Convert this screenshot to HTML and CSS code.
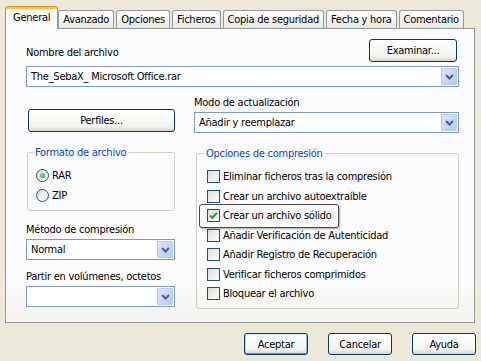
FILE: index.html
```html
<!DOCTYPE html>
<html lang="es">
<head>
    <meta charset="UTF-8">
    <title>Nombre y parámetros del archivo</title>
    <link rel="stylesheet" href="styles.css">
</head>
<body>

<div class="dialog">
    <div class="tabs">
        <div class="tab active">General</div>
        <div class="tab">Avanzado</div>
        <div class="tab">Opciones</div>
        <div class="tab">Ficheros</div>
        <div class="tab">Copia de seguridad</div>
        <div class="tab">Fecha y hora</div>
        <div class="tab">Comentario</div>
    </div>

    <div class="panel">
        <div class="name-row">
            <span class="label">Nombre del archivo</span>
            <button class="btn btn-browse">Examinar...</button>
        </div>
        <div class="combo combo-name">
            <span class="combo-text">The_SebaX_ Microsoft Office.rar</span>
            <span class="combo-arrow"><svg width="9" height="6" viewBox="0 0 9 6"><path d="M1 1l3.5 3.5L8 1" fill="none" stroke="#4D6185" stroke-width="2"/></svg></span>
        </div>

        <div class="cols">
            <div class="col-left">
                <button class="btn btn-profiles">Perfiles...</button>

                <fieldset class="group group-format">
                    <legend>Formato de archivo</legend>
                    <div class="radio-row"><span class="radio checked"></span>RAR</div>
                    <div class="radio-row"><span class="radio"></span>ZIP</div>
                </fieldset>

                <div class="label label-method">Método de compresión</div>
                <div class="combo">
                    <span class="combo-text">Normal</span>
                    <span class="combo-arrow"><svg width="9" height="6" viewBox="0 0 9 6"><path d="M1 1l3.5 3.5L8 1" fill="none" stroke="#4D6185" stroke-width="2"/></svg></span>
                </div>

                <div class="label label-split">Partir en volúmenes, octetos</div>
                <div class="combo">
                    <span class="combo-text"></span>
                    <span class="combo-arrow"><svg width="9" height="6" viewBox="0 0 9 6"><path d="M1 1l3.5 3.5L8 1" fill="none" stroke="#4D6185" stroke-width="2"/></svg></span>
                </div>
            </div>

            <div class="col-right">
                <div class="label label-mode">Modo de actualización</div>
                <div class="combo">
                    <span class="combo-text">Añadir y reemplazar</span>
                    <span class="combo-arrow"><svg width="9" height="6" viewBox="0 0 9 6"><path d="M1 1l3.5 3.5L8 1" fill="none" stroke="#4D6185" stroke-width="2"/></svg></span>
                </div>

                <fieldset class="group group-options">
                    <legend>Opciones de compresión</legend>
                    <div class="check-row"><span class="check"></span>Eliminar ficheros tras la compresión</div>
                    <div class="check-row"><span class="check"></span>Crear un archivo autoextraíble</div>
                    <div class="check-row focused"><span class="check"><svg width="11" height="11" viewBox="0 0 11 11"><path d="M2 5.5l2.3 2.3L9 3" fill="none" stroke="#21A121" stroke-width="2"/></svg></span>Crear un archivo sólido</div>
                    <div class="check-row"><span class="check"></span>Añadir Verificación de Autenticidad</div>
                    <div class="check-row"><span class="check"></span>Añadir Registro de Recuperación</div>
                    <div class="check-row"><span class="check"></span>Verificar ficheros comprimidos</div>
                    <div class="check-row"><span class="check"></span>Bloquear el archivo</div>
                </fieldset>
            </div>
        </div>
    </div>

    <div class="buttons">
        <button class="btn btn-default">Aceptar</button>
        <button class="btn">Cancelar</button>
        <button class="btn">Ayuda</button>
    </div>
</div>

</body>
</html>
```

FILE: styles.css
```css
* {
    box-sizing: border-box;
}
body {
    margin: 0;
    background: #ECE9D8;
    font-family: "DejaVu Sans Condensed", "Liberation Sans", sans-serif;
    font-size: 11px;
    line-height: 13px;
    letter-spacing: -0.25px;
    color: #000;
}
.dialog {
    width: 481px;
    height: 361px;
    padding: 6px 5px 0 5px;
}

/* pestañas */
.tabs {
    display: flex;
    align-items: flex-end;
    height: 23px;
    margin-bottom: -1px;
    position: relative;
    z-index: 1;
}
.tab {
    height: 18px;
    margin: 0 0 1px 2px;
    padding: 2px 4px 0;
    border: 1px solid #919B9C;
    border-bottom: none;
    border-radius: 3px 3px 0 0;
    background: linear-gradient(#FFFFFF, #F4F4F0 60%, #E8E6DC);
    white-space: nowrap;
}
.tab.active {
    height: 23px;
    margin: 0 -2px 0 0;
    padding: 4px 7px 0;
    border-top-color: #E68B2C;
    background: #FCFCFE;
    box-shadow: inset 0 2px 0 #FFC73C;
}

/* panel */
.panel {
    height: 295px;
    margin-right: 1px;
    padding: 10px 15px 0 20px;
    border: 1px solid #919B9C;
    background: linear-gradient(#FCFCFE 85%, #F4F3EE);
}
.name-row {
    display: flex;
    justify-content: space-between;
    align-items: flex-end;
}
.name-row .label {
    margin-bottom: 3px;
}
.cols {
    display: flex;
    gap: 19px;
}
.col-left {
    width: 149px;
    display: flex;
    flex-direction: column;
}
.col-right {
    flex: 1;
    display: flex;
    flex-direction: column;
}
.label-mode {
    margin-top: 9px;
}
.label-method {
    margin-top: 12px;
}
.label-split {
    margin-top: 10px;
}

/* botones */
.btn {
    width: 64px;
    height: 22px;
    padding: 0;
    border: 1px solid #003C74;
    border-radius: 3px;
    background: linear-gradient(#FFFFFF, #F3F3EF 80%, #D6D0C5);
    font: inherit;
    letter-spacing: inherit;
    color: #000;
}
.btn-browse {
    width: 88px;
    height: 23px;
    margin-right: 2px;
}
.btn-profiles {
    width: 147px;
    height: 23px;
    margin: 22px 0 0 2px;
}
.btn-default {
    box-shadow: inset 0 1px 0 #CEE7FF, inset 0 -1px 0 #6982EE, inset 1px 0 0 #B8D0F9, inset -1px 0 0 #94AEF1;
}
.buttons {
    display: flex;
    justify-content: flex-end;
    gap: 20px;
    margin-top: 10px;
}

/* combos */
.combo {
    display: flex;
    align-items: center;
    height: 21px;
    margin-top: 3px;
    padding-left: 4px;
    border: 1px solid #7F9DB9;
    background: #fff;
}
.combo-name {
    margin-top: 4px;
}
.combo-text {
    flex: 1;
    white-space: nowrap;
}
.combo-arrow {
    width: 16px;
    height: 17px;
    margin-right: 1px;
    display: flex;
    align-items: center;
    justify-content: center;
    border: 1px solid #BACCF6;
    border-radius: 1px;
    background: linear-gradient(135deg, #DCE6FD, #B5C9F6);
}

/* grupos */
.group {
    margin: 14px 0 0;
    border: 1px solid #D0D0BF;
    border-radius: 3px;
}
.group legend {
    padding: 0 2px;
    margin-left: -3px;
    color: #0046D5;
}
.group-format {
    margin-left: 1px;
    padding: 6px 0 5px 8px;
}
.group-options {
    margin-left: 2px;
    padding: 7px 0 4px 10px;
}
.radio-row,
.check-row {
    display: flex;
    align-items: center;
    gap: 3px;
    white-space: nowrap;
}
.radio-row {
    height: 20px;
}
.check-row {
    height: 19.5px;
}
.radio {
    width: 13px;
    height: 13px;
    border: 1px solid #1C5180;
    border-radius: 50%;
    background: linear-gradient(135deg, #DCDCD7, #FFFFFF);
    display: flex;
    align-items: center;
    justify-content: center;
}
.radio.checked::after {
    content: "";
    width: 5px;
    height: 5px;
    border-radius: 50%;
    background: radial-gradient(circle at 40% 40%, #7BE07B, #21A121);
}
.check {
    width: 13px;
    height: 13px;
    border: 1px solid #1C5180;
    background: linear-gradient(135deg, #DCDCD7, #FFFFFF);
    display: flex;
}
.check-row.focused {
    width: fit-content;
    height: 23.5px;
    margin: -2px 0 -2px -8px;
    padding: 0 6px 0 7px;
    border: 1px solid #4A4A4A;
    border-radius: 3px;
    background: #FAFAF8;
    box-shadow: 1px 1px 2px rgba(0, 0, 0, 0.35);
}
```
